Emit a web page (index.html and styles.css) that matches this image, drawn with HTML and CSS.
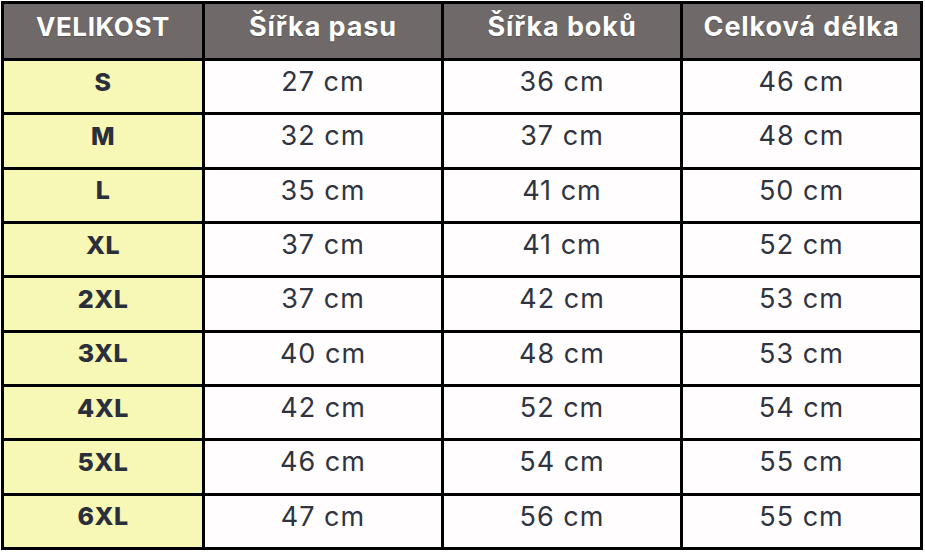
FILE: index.html
```html
<!DOCTYPE html>
<html lang="cs">
<head>
<meta charset="utf-8">
<title>Velikostní tabulka</title>
<link rel="stylesheet" href="styles.css">
</head>
<body>
<div class="chart">
  <div class="cell head head-caps">VELIKOST</div>
  <div class="cell head">Šířka pasu</div>
  <div class="cell head">Šířka boků</div>
  <div class="cell head">Celková délka</div>

  <div class="cell size">S</div><div class="cell val">27 cm</div><div class="cell val">36 cm</div><div class="cell val">46 cm</div>
  <div class="cell size">M</div><div class="cell val">32 cm</div><div class="cell val">37 cm</div><div class="cell val">48 cm</div>
  <div class="cell size">L</div><div class="cell val">35 cm</div><div class="cell val">41 cm</div><div class="cell val">50 cm</div>
  <div class="cell size">XL</div><div class="cell val">37 cm</div><div class="cell val">41 cm</div><div class="cell val">52 cm</div>
  <div class="cell size">2XL</div><div class="cell val">37 cm</div><div class="cell val">42 cm</div><div class="cell val">53 cm</div>
  <div class="cell size">3XL</div><div class="cell val">40 cm</div><div class="cell val">48 cm</div><div class="cell val">53 cm</div>
  <div class="cell size">4XL</div><div class="cell val">42 cm</div><div class="cell val">52 cm</div><div class="cell val">54 cm</div>
  <div class="cell size">5XL</div><div class="cell val">46 cm</div><div class="cell val">54 cm</div><div class="cell val">55 cm</div>
  <div class="cell size">6XL</div><div class="cell val">47 cm</div><div class="cell val">56 cm</div><div class="cell val">55 cm</div>
</div>
</body>
</html>
```
FILE: styles.css
```css
html, body {
  margin: 0;
  padding: 0;
  background: #ffffff;
}
body {
  padding: 1px 0 0 1px;
  font-family: Inter, "Open Sans", "DejaVu Sans", sans-serif;
}
.chart {
  display: grid;
  grid-template-columns: 198px 236px 236px 237px;
  grid-template-rows: 54px repeat(9, 1fr);
  gap: 3px;
  padding: 3px;
  width: 916px;
  height: 543px;
  background: #000000;
}
.cell {
  display: flex;
  align-items: center;
  justify-content: center;
  padding-bottom: 10px;
  box-sizing: border-box;
}
.head {
  background: #6f6a69;
  color: #ffffff;
  font-weight: 700;
  font-size: 27px;
  letter-spacing: 0.9px;
  padding-bottom: 9px;
  text-shadow: 0 1px 1px rgba(0,0,0,0.25);
}
.head-caps {
  font-size: 26px;
  letter-spacing: 0.6px;
}
.size {
  background: #f8f8b6;
  color: #2a2f3b;
  font-weight: 800;
  font-size: 25px;
  letter-spacing: 0.5px;
}
.val {
  background: #fffdfd;
  color: #2f3440;
  font-weight: 400;
  font-size: 27px;
  letter-spacing: 1px;
}
```
